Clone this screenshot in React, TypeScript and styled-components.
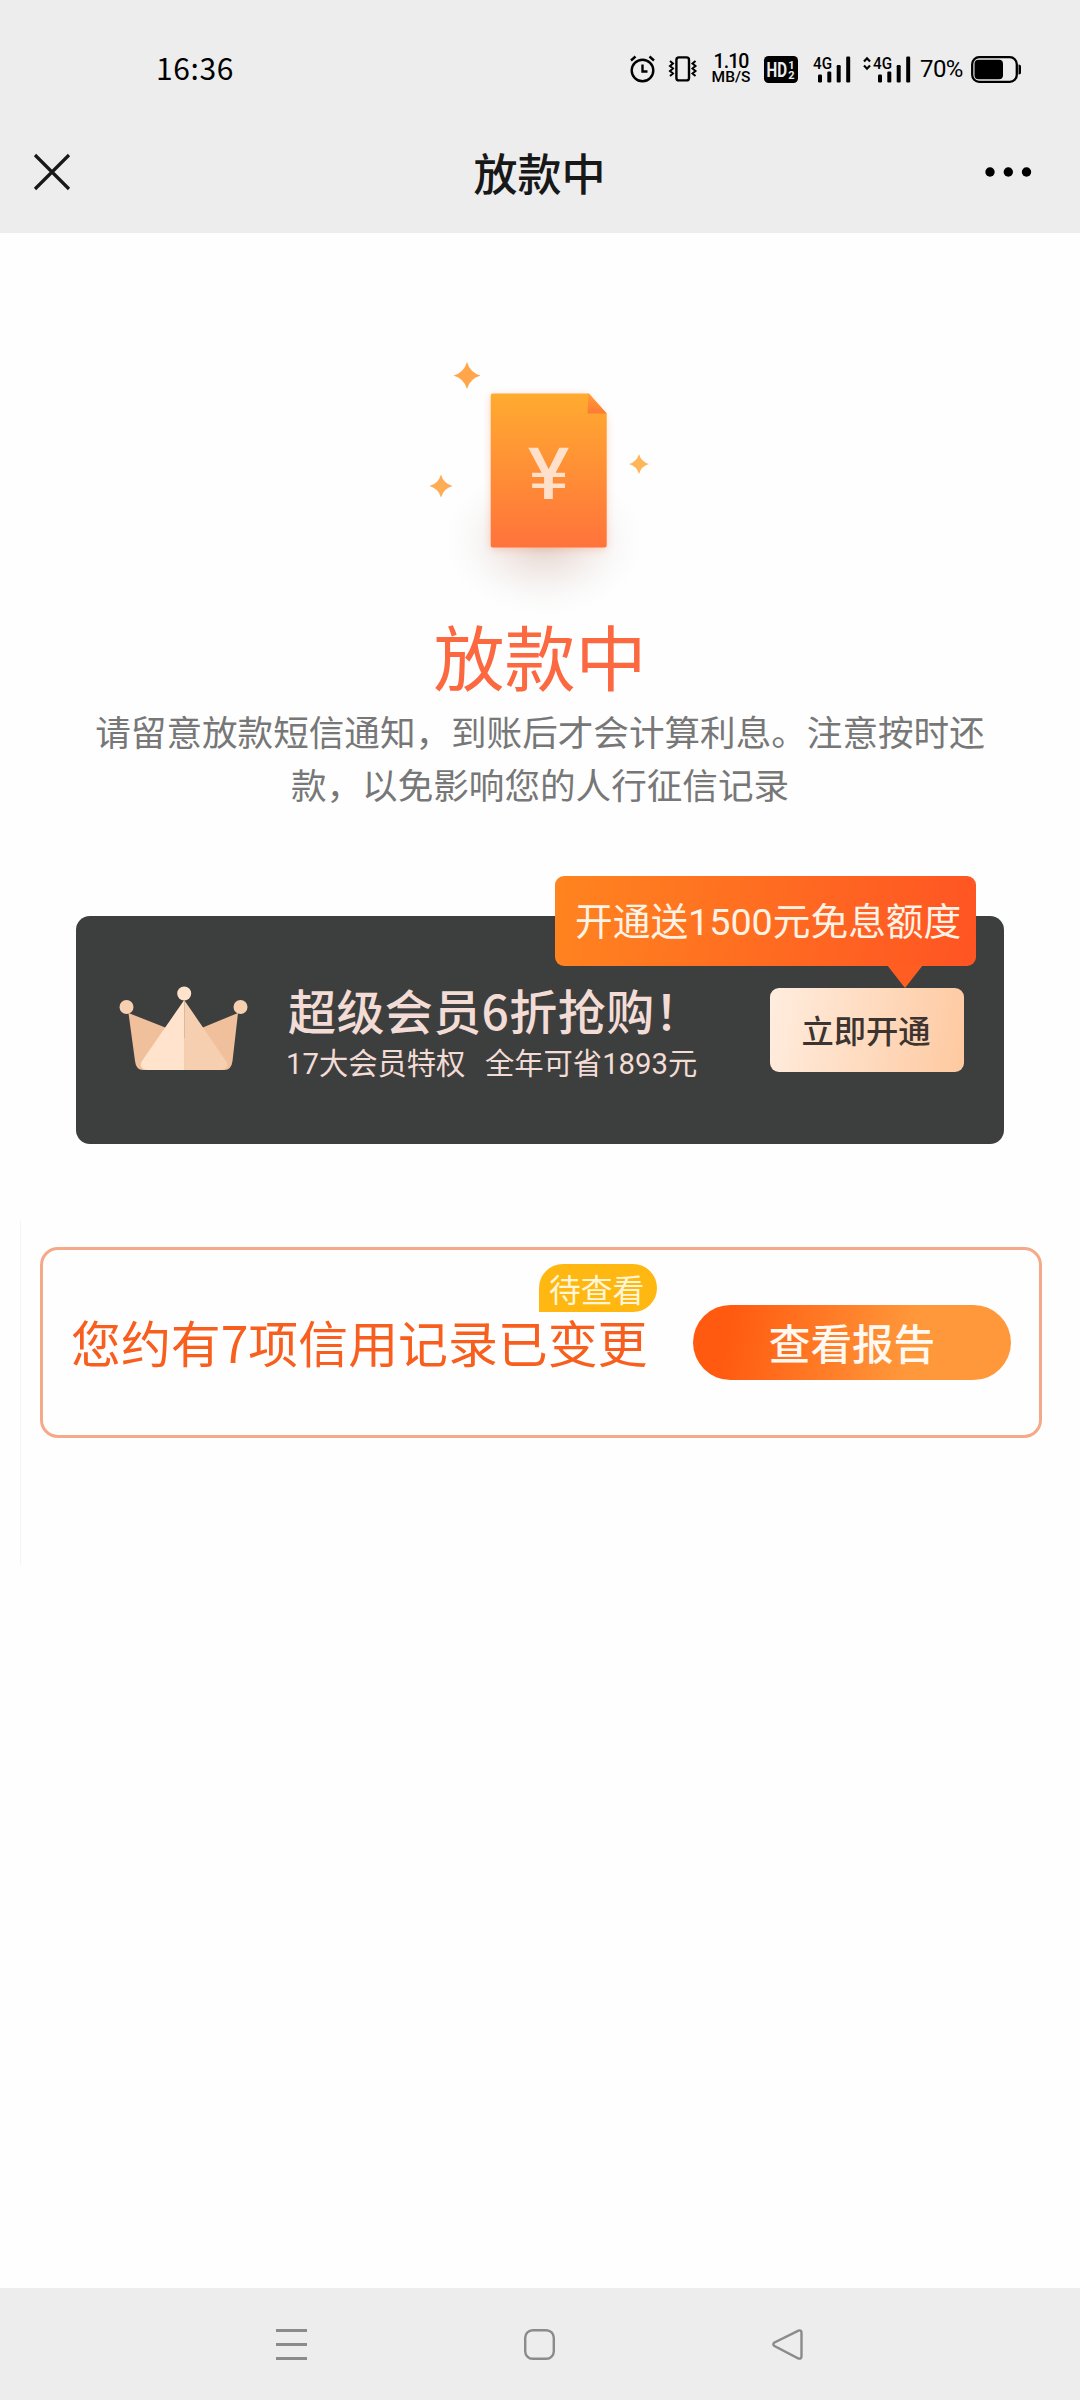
import React from "react";
import styled, { createGlobalStyle } from "styled-components";

const cjk = `"Noto Sans CJK SC", sans-serif`;

const GlobalStyle = createGlobalStyle`
  * { box-sizing: border-box; }
  body { margin: 0; background: #fefefe; font-family: ${cjk}; }
`;

const Screen = styled.div`
  width: 1080px;
  height: 2400px;
  display: flex;
  flex-direction: column;
  background: #fefefe;
  overflow: hidden;
`;

const Header = styled.header`
  height: 233px;
  background: #ededed;
  flex: none;
`;

const StatusBar = styled.div`
  height: 112px;
  padding: 26px 58px 0 156px;
  display: flex;
  align-items: center;
  color: #000;
`;

const Clock = styled.time`
  font: 400 30px/40px ${cjk};
  letter-spacing: 0.6px;
  white-space: nowrap;
  margin-bottom: 4px;
`;

const StatusIcons = styled.div`
  margin-left: auto;
  display: flex;
  align-items: center;
`;

const Speed = styled.div`
  display: flex;
  flex-direction: column;
  align-items: center;
  width: 38px;
  margin-left: 15px;
  font-family: Roboto, sans-serif;
  font-weight: 500;
`;

const SpeedValue = styled.span`
  font-size: 19.5px;
  line-height: 16px;
  letter-spacing: -0.9px;
`;

const SpeedUnit = styled.span`
  font-size: 15.5px;
  line-height: 14px;
`;

const Percent = styled.span`
  width: 44px;
  margin-left: 9px;
  font: 400 24px/27px Roboto, sans-serif;
  letter-spacing: -0.6px;
`;

const Icon = styled.svg<{ $gap?: number }>`
  display: block;
  flex: none;
  overflow: visible;
  margin-left: ${(p) => p.$gap ?? 0}px;
`;

const TitleBar = styled.div`
  height: 119px;
  padding: 0 48px 0 33px;
  display: grid;
  grid-template-columns: 38px 1fr 48px;
  align-items: center;
`;

const PageTitle = styled.h1`
  margin: 0;
  padding-left: 24px;
  font: 500 44px/64px ${cjk};
  color: #181818;
  text-align: center;
`;

const Main = styled.main`
  flex: 1;
  display: flex;
  flex-direction: column;
  align-items: center;
`;

const Illustration = styled.svg`
  display: block;
  margin-top: 107px;
  flex: none;
`;

const StateTitle = styled.h2`
  margin: -16px 0 0;
  font: 400 71px/100px ${cjk};
  color: #fc683f;
`;

const Hint = styled.p`
  margin: 0;
  width: 892px;
  font: 400 35.6px/53px ${cjk};
  color: #777;
  text-align: center;
`;

const MemberCard = styled.section`
  position: relative;
  flex: none;
  width: 928px;
  height: 228px;
  margin-top: 106px;
  padding: 0 40px 0 43px;
  display: flex;
  align-items: flex-start;
  border-radius: 14px;
  background: #3d3f3e;
`;

const Crown = styled.svg`
  display: block;
  margin-top: 70px;
  flex: none;
`;

const MemberText = styled.div`
  margin: 60px 0 0 38px;
  display: flex;
  flex-direction: column;
  color: #f3dcd5;
  white-space: nowrap;
`;

const MemberTitle = styled.strong`
  padding-left: 2px;
  font: 500 48px/66px ${cjk};
  letter-spacing: 0.4px;
`;

const MemberNote = styled.span`
  font: 400 29.3px/44px Roboto, ${cjk};
  word-spacing: 2.5px;
  white-space: pre;
`;

const OpenButton = styled.button`
  margin: 72px 0 0 auto;
  width: 194px;
  height: 84px;
  padding: 0 2px 2px 0;
  border: 0;
  border-radius: 9px;
  background: linear-gradient(100deg, #ffeddf, #fec9a0);
  color: #3b3431;
  font: 500 32.3px/80px ${cjk};
`;

const Bubble = styled.div`
  position: absolute;
  left: 479px;
  top: -40px;
  width: 421px;
  height: 90px;
  padding-left: 20px;
  border-radius: 9px;
  background: linear-gradient(100deg, #ff841f, #ff5423);
  color: #fff3e6;
  font: 400 37.7px/92px Roboto, ${cjk};
  white-space: nowrap;
  &::after {
    content: "";
    position: absolute;
    left: 332px;
    top: 89px;
    border: 18px solid transparent;
    border-top: 23px solid #ff5d22;
    border-bottom: 0;
  }
`;

const ReportSection = styled.section`
  width: 1060px;
  height: 345px;
  margin: 76px 0 0 20px;
  padding: 27px 0 0 19px;
  border-left: 1px solid #f6f4ec;
  flex: none;
`;

const ReportCard = styled.div`
  width: 1002px;
  height: 191px;
  padding: 0 28px 0 28px;
  display: flex;
  align-items: flex-start;
  border: 3px solid #f5a988;
  border-radius: 18px;
`;

const ReportText = styled.div`
  position: relative;
  margin-top: 55px;
  font: 400 49.9px/72px ${cjk};
  color: #f85f1e;
  white-space: nowrap;
`;

const Badge = styled.span`
  position: absolute;
  left: 468px;
  top: -41px;
  width: 118px;
  height: 48px;
  border-radius: 24px 24px 24px 0;
  background: #ffb712;
  color: #fff6d8;
  font: 400 31.8px/48px ${cjk};
  padding-left: 10px;
`;

const ReportButton = styled.button`
  margin: 55px 0 0 auto;
  width: 318px;
  height: 75px;
  padding: 0;
  border: 0;
  border-radius: 38px;
  background: linear-gradient(100deg, #ff5a10 12%, #ff983a 68%);
  color: #fff9f2;
  font: 500 41.6px/75px ${cjk};
`;

const NavBar = styled.nav`
  height: 112px;
  flex: none;
  padding: 0 277px 0 276px;
  display: flex;
  justify-content: space-between;
  align-items: center;
  background: #ededed;
`;

const star = (x: number, y: number, r: number) =>
  `M${x} ${y - r}Q${x + r * 0.22} ${y - r * 0.22} ${x + r} ${y}Q${x + r * 0.22} ${y + r * 0.22} ${x} ${y + r}Q${x - r * 0.22} ${y + r * 0.22} ${x - r} ${y}Q${x - r * 0.22} ${y - r * 0.22} ${x} ${y - r}Z`;

const Alarm = () => (
  <Icon width="26" height="28" viewBox="0 0 26 28" fill="none" stroke="#000" strokeWidth="2.4">
    <circle cx="12.500" cy="15.500" r="10.800" />
    <path d="M12.500 9.500v7h5M1 5.500 5.500 1.500M24 5.500 19.500 1.500" />
  </Icon>
);

const Vibrate = () => (
  <Icon $gap={13} width="28" height="26" viewBox="0 0 28 26" fill="none" stroke="#000" strokeWidth="2.4">
    <rect x="7.400" y="1.400" width="12.600" height="23" rx="2.500" />
    <path
      strokeWidth="2"
      d="m1 5 3 2.500L1 10l3 2.500L1 15l3 2.500L1 20M26.500 5l-3 2.500 3 2.500-3 2.500 3 2.500-3 2.500 3 2.500"
    />
  </Icon>
);

const Hd = () => (
  <Icon $gap={14} width="34" height="27" viewBox="0 0 34 27">
    <rect width="34" height="27" rx="4.500" />
    <g fill="#ededed" fontFamily="Roboto, sans-serif" fontWeight="700">
      <text x="2.500" y="20.500" fontSize="19.500" textLength="20.500" lengthAdjust="spacingAndGlyphs">HD</text>
      <text x="24.200" y="12.500" fontSize="11">1</text>
      <text x="24.200" y="23" fontSize="11">2</text>
    </g>
  </Icon>
);

const Signal = ({ data, gap }: { data?: boolean; gap: number }) => (
  <Icon $gap={gap} width={data ? 48 : 38} height="27" viewBox={data ? "-10 0 48 27" : "0 0 38 27"}>
    {data && <path d="m-9 5.500 3-3.200 3 3.200M-9 9.500l3 3.200 3-3.200" fill="none" stroke="#000" strokeWidth="2.200" />}
    <text x="0" y="12.800" fontSize="16.800" fontWeight="500" fontFamily="Roboto, sans-serif" textLength="19" lengthAdjust="spacingAndGlyphs">4G</text>
    <rect x="5" y="18.500" width="4" height="8" rx="1.200" />
    <rect x="14.300" y="15.500" width="4" height="11" rx="1.200" />
    <rect x="23.700" y="9" width="4" height="17.500" rx="1.200" />
    <rect x="33.200" y="0.500" width="4" height="26" rx="1.200" />
  </Icon>
);

const Battery = () => (
  <Icon $gap={7} width="51" height="27" viewBox="0 0 51 27">
    <rect x="1.200" y="1.200" width="44.600" height="24.600" rx="7" fill="none" stroke="#000" strokeWidth="2.300" />
    <rect x="3.500" y="3.700" width="28.500" height="19.600" rx="4" />
    <path d="M47.500 8.500c2 0 2.500 1 2.500 2v6c0 1-.5 2-2.500 2z" />
  </Icon>
);

const LoanDocument = () => (
  <Illustration width="280" height="280" viewBox="400 340 280 280">
    <defs>
      <linearGradient id="paper" x1="0" y1="0" x2="0" y2="1">
        <stop offset="0" stopColor="#ffab30" />
        <stop offset="1" stopColor="#ff733b" />
      </linearGradient>
      <linearGradient id="fold" x1="0" y1="0" x2="0" y2="1">
        <stop offset="0" stopColor="#ff9b36" />
        <stop offset="1" stopColor="#ff7a35" />
      </linearGradient>
      <radialGradient id="glow">
        <stop offset="0" stopColor="#b4826b" stopOpacity="0.360" />
        <stop offset="0.450" stopColor="#bb9484" stopOpacity="0.170" />
        <stop offset="0.750" stopColor="#c0b0a8" stopOpacity="0.060" />
        <stop offset="1" stopColor="#ccc" stopOpacity="0" />
      </radialGradient>
      <filter id="soft" x="-20%" y="-20%" width="140%" height="140%">
        <feGaussianBlur stdDeviation="4" />
      </filter>
    </defs>
    <ellipse cx="544" cy="541" rx="100" ry="75" fill="url(#glow)" />
    <path d="M491 396H586L606 418V549H491Z" fill="#f08a5c" opacity="0.400" filter="url(#soft)" />
    <path d="M492.500 393.500H589L606.700 413.500V545.500a2 2 0 0 1-2 2H492.700a2 2 0 0 1-2-2V395.500a2 2 0 0 1 2-2Z" fill="url(#paper)" />
    <path d="M588.500 393.500 606.700 413.500H587.500Z" fill="url(#fold)" />
    <path d="M528.300 447.700h9.700l10.700 21.500 10.600-21.500h9.600l-13.300 25h9.400v4.300h-12.200v6.500h12.200v4.500h-12.200V499h-8.700v-11h-12v-4.500h12V477h-12v-4.300h9.600Z" fill="#ffe0cb" />
    <path d={star(467, 375.5, 13.5)} fill="#ffa64a" />
    <path d={star(441, 486, 11.5)} fill="#ffac57" />
    <path d={star(639, 464, 10)} fill="#ffb65a" />
  </Illustration>
);

const CrownIcon = () => (
  <Crown width="129" height="85" viewBox="119 986 129 85">
    <path d="M128.500 1013 164 1027 184.500 1038 204 1027 238 1013 232.500 1061q-1.200 9-8 9H143q-7 0-8-9Z" fill="#f0c09c" />
    <path d="M184.200 1000V1070H147q-9-1.500-5-9Z" fill="#ffe3cd" />
    <path d="M184.200 1000V1070H221q9.500-1.500 5-9Z" fill="#f6cfb1" />
    <circle cx="126.500" cy="1007" r="7" fill="#f7d0b2" />
    <circle cx="184.200" cy="993.500" r="7" fill="#ffe3cd" />
    <circle cx="240.500" cy="1007" r="7" fill="#f7d0b2" />
  </Crown>
);

export default function App() {
  return (
    <Screen>
      <GlobalStyle />
      <Header>
        <StatusBar>
          <Clock>16:36</Clock>
          <StatusIcons>
            <Alarm />
            <Vibrate />
            <Speed>
              <SpeedValue>1.10</SpeedValue>
              <SpeedUnit>MB/S</SpeedUnit>
            </Speed>
            <Hd />
            <Signal gap={15} />
            <Signal data gap={12} />
            <Percent>70%</Percent>
            <Battery />
          </StatusIcons>
        </StatusBar>
        <TitleBar>
          <Icon width="38" height="38" viewBox="0 0 38 38" stroke="#181818" strokeWidth="3.200" fill="none">
            <path d="m2 2 34 34M36 2 2 36" />
          </Icon>
          <PageTitle>放款中</PageTitle>
          <Icon width="48" height="12" viewBox="0 0 48 12" fill="#000">
            <circle cx="6" cy="6" r="4.700" />
            <circle cx="24.300" cy="6" r="4.700" />
            <circle cx="42.500" cy="6" r="4.700" />
          </Icon>
        </TitleBar>
      </Header>
      <Main>
        <LoanDocument />
        <StateTitle>放款中</StateTitle>
        <Hint>请留意放款短信通知，到账后才会计算利息。注意按时还款，以免影响您的人行征信记录</Hint>
        <MemberCard>
          <CrownIcon />
          <MemberText>
            <MemberTitle>超级会员6折抢购！</MemberTitle>
            <MemberNote>{"17大会员特权  全年可省1893元"}</MemberNote>
          </MemberText>
          <OpenButton>立即开通</OpenButton>
          <Bubble>开通送1500元免息额度</Bubble>
        </MemberCard>
        <ReportSection>
          <ReportCard>
            <ReportText>
              您约有7项信用记录已变更
              <Badge>待查看</Badge>
            </ReportText>
            <ReportButton>查看报告</ReportButton>
          </ReportCard>
        </ReportSection>
      </Main>
      <NavBar>
        <Icon width="31" height="31" viewBox="0 0 31 31" stroke="#8b8b8b" strokeWidth="2.800">
          <path d="M0 1.500h31M0 15.500h31M0 29.500h31" />
        </Icon>
        <Icon width="31" height="31" viewBox="0 0 31 31" stroke="#8b8b8b" strokeWidth="2.400" fill="none">
          <rect x="1.200" y="1.200" width="28.600" height="28.600" rx="7.500" />
        </Icon>
        <Icon width="31" height="31" viewBox="0 0 31 31" stroke="#8b8b8b" strokeWidth="2.400" fill="none">
          <path d="M26.500 1.600 2.500 13.500q-2.400 1.700 0 3.600l24 12.400q3 .8 3-2.500V4q0-3.300-3-2.400Z" />
        </Icon>
      </NavBar>
    </Screen>
  );
}
